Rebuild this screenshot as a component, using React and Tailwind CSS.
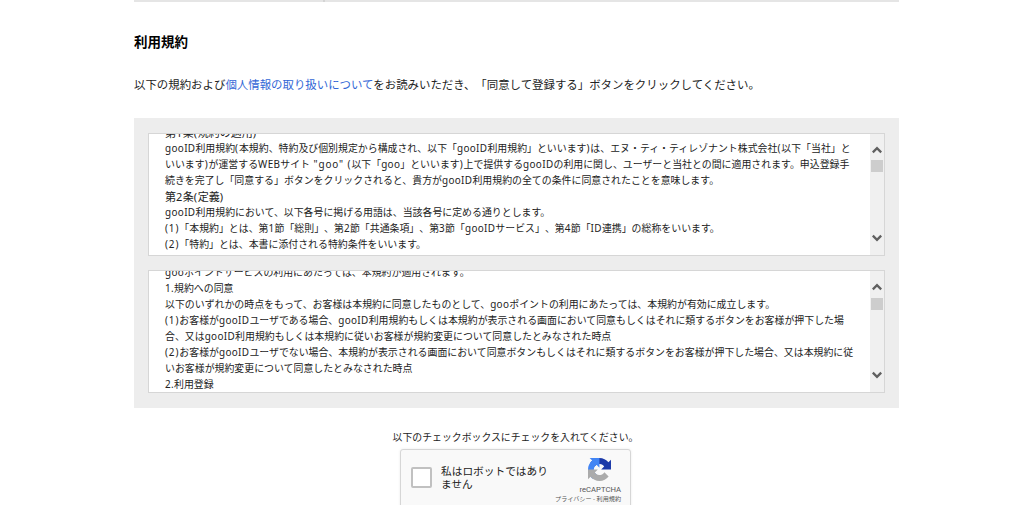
import clsx from 'clsx';

const memberTerms = [
  { text: '第1条(規約の適用)', heading: true },
  { text: 'gooID利用規約(本規約、特約及び個別規定から構成され、以下「gooID利用規約」といいます)は、エヌ・ティ・ティレゾナント株式会社(以下「当社」と' },
  { text: 'いいます)が運営するWEBサイト "goo" (以下「goo」といいます)上で提供するgooIDの利用に関し、ユーザーと当社との間に適用されます。申込登録手' },
  { text: '続きを完了し「同意する」ボタンをクリックされると、貴方がgooID利用規約の全ての条件に同意されたことを意味します。' },
  { text: '第2条(定義)', heading: true },
  { text: 'gooID利用規約において、以下各号に掲げる用語は、当該各号に定める通りとします。' },
  { text: '(1)「本規約」とは、第1節「総則」、第2節「共通条項」、第3節「gooIDサービス」、第4節「ID連携」の総称をいいます。' },
  { text: '(2)「特約」とは、本書に添付される特約条件をいいます。' },
];

const pointTerms = [
  { text: 'gooポイントサービスの利用にあたっては、本規約が適用されます。' },
  { text: '1.規約への同意' },
  { text: '以下のいずれかの時点をもって、お客様は本規約に同意したものとして、gooポイントの利用にあたっては、本規約が有効に成立します。' },
  { text: '(1)お客様がgooIDユーザである場合、gooID利用規約もしくは本規約が表示される画面において同意もしくはそれに類するボタンをお客様が押下した場' },
  { text: '合、又はgooID利用規約もしくは本規約に従いお客様が規約変更について同意したとみなされた時点' },
  { text: '(2)お客様がgooIDユーザでない場合、本規約が表示される画面において同意ボタンもしくはそれに類するボタンをお客様が押下した場合、又は本規約に従' },
  { text: 'いお客様が規約変更について同意したとみなされた時点' },
  { text: '2.利用登録' },
];

function Chevron({ down }) {
  return (
    <svg viewBox="0 0 10 8" className={clsx('w-[10px] h-2', down && 'rotate-180')} fill="none">
      <path d="M0.8 6.4 L5 2.2 L9.2 6.4" stroke="#606060" strokeWidth="2.3" />
    </svg>
  );
}

// Latin runs are tracked slightly wider than the Japanese around them, brackets more so
function TermsLine({ text, heading }) {
  return (
    <p className={heading ? 'text-[11px]' : ''}>
      {text.split(/([\x20-\x7e]+)/).map((part, idx) => (
        idx % 2 ? (
          <span key={idx} className={/[()]/.test(part) ? 'tracking-[0.9px]' : 'tracking-[0.35px]'}>{part}</span>
        ) : part
      ))}
    </p>
  );
}

function TermsBox({ lines, className, textClassName, thumbClassName }) {
  return (
    <div className={clsx('flex justify-between border border-[#d6d6d6] bg-white overflow-hidden', className)}>
      <div className={clsx('pl-4 whitespace-nowrap text-[9.92px] leading-[15.95px]', textClassName)}>
        {lines.map((line) => (
          <TermsLine key={line.text} text={line.text} heading={line.heading} />
        ))}
      </div>
      <div className="w-[14px] shrink-0 bg-[#f0f0f0] flex flex-col items-center pt-3 pb-[13px]">
        <Chevron />
        <div className={clsx('w-3 h-3 bg-[#cdcdcd]', thumbClassName)} />
        <div className="mt-auto flex">
          <Chevron down />
        </div>
      </div>
    </div>
  );
}

function RecaptchaLogo() {
  return (
    <svg viewBox="0 0 64 64" className="w-[23px] h-[23px]">
      <path
        fill="#1c3aa9"
        d="M64 31.955l-.033-1.37V4.687l-7.16 7.16C50.948 4.674 42.033.093 32.05.093c-10.4 0-19.622 4.96-25.458 12.64l11.736 11.86a15.55 15.55 0 0 1 4.754-5.334c2.05-1.6 4.952-2.906 8.968-2.906.485 0 .86.057 1.135.163 4.976.393 9.288 3.14 11.828 7.124l-8.307 8.307L64 31.953"
      />
      <path
        fill="#4285f4"
        d="M31.862.094l-1.37.033H4.594l7.16 7.16C4.58 13.147 0 22.06 0 32.046c0 10.4 4.96 19.622 12.64 25.458L24.5 45.768a15.55 15.55 0 0 1-5.334-4.754c-1.6-2.05-2.906-4.952-2.906-8.968 0-.485.057-.86.163-1.135.393-4.976 3.14-9.288 7.124-11.828l8.307 8.307L31.86.095"
      />
      <path
        fill="#ababab"
        d="M.001 32.045l.033 1.37v25.898l7.16-7.16c5.86 7.173 14.774 11.754 24.76 11.754 10.4 0 19.622-4.96 25.458-12.64l-11.736-11.86a15.55 15.55 0 0 1-4.754 5.334c-2.05 1.6-4.952 2.906-8.968 2.906-.485 0-.86-.057-1.135-.163-4.976-.393-9.288-3.14-11.828-7.124l8.307-8.307-37.295.002"
      />
    </svg>
  );
}

function Recaptcha() {
  return (
    <div className="w-[231px] h-[78px] shrink-0 flex items-start rounded-[3px] border border-[#d6d6d6] bg-[#f9f9f9] shadow-[0_0_3px_rgba(0,0,0,0.08)]">
      <div className="mt-[17px] ml-[10px] w-[21px] h-[21px] shrink-0 rounded-[2px] border-2 border-[#c1c1c1] bg-white" />
      <p className="mt-[15px] ml-[9px] w-[112px] text-[10.7px] leading-[12.5px] whitespace-nowrap">
        私はロボットではあり
        <br />
        ません
      </p>
      <div className="ml-auto mr-[9px] mt-2 flex flex-col items-end whitespace-nowrap text-[#555]">
        <div className="mr-[10px]">
          <RecaptchaLogo />
        </div>
        <span className="mt-1 font-[Roboto,sans-serif] text-[7.7px] leading-[9px]">reCAPTCHA</span>
        <span className="text-[6.1px] leading-[9px]">プライバシー - 利用規約</span>
      </div>
    </div>
  );
}

export default function App() {
  return (
    <div className="h-[505px] overflow-hidden bg-white text-[#222] font-['Noto_Sans','Noto_Sans_CJK_JP',sans-serif] [text-spacing-trim:space-all]">
      <div className="ml-[134px] w-[765px] flex flex-col">
        <div className="flex h-[2px] shrink-0 bg-[#e5e5e5]">
          <div className="w-[189px]" />
          <div className="w-[2px] bg-[#d4d4d4]" />
        </div>
        <h2 className="mt-[30px] text-[13.5px] leading-5 font-bold text-black">利用規約</h2>
        <p className="mt-[23px] text-[11.43px] leading-5 whitespace-nowrap">
          以下の規約および<a href="#" className="text-[#3367d6]">個人情報の取り扱いについて</a>をお読みいただき、「同意して登録する」ボタンをクリックしてください。
        </p>
        <div className="mt-[23px] h-[290px] bg-[#ededed] px-[14px] pt-[15px] flex flex-col gap-[14px]">
          <TermsBox lines={memberTerms} className="h-[123px]" textClassName="-mt-[9px]" thumbClassName="mt-[6px]" />
          <TermsBox lines={pointTerms} className="h-[123px]" textClassName="-mt-[6px]" thumbClassName="mt-[7px]" />
        </div>
        <p className="mt-[19px] -ml-[2px] text-center text-[9.9px] leading-5">
          以下のチェックボックスにチェックを入れてください。
        </p>
        <div className="mt-[2px] -ml-[2px] flex justify-center">
          <Recaptcha />
        </div>
      </div>
    </div>
  );
}
